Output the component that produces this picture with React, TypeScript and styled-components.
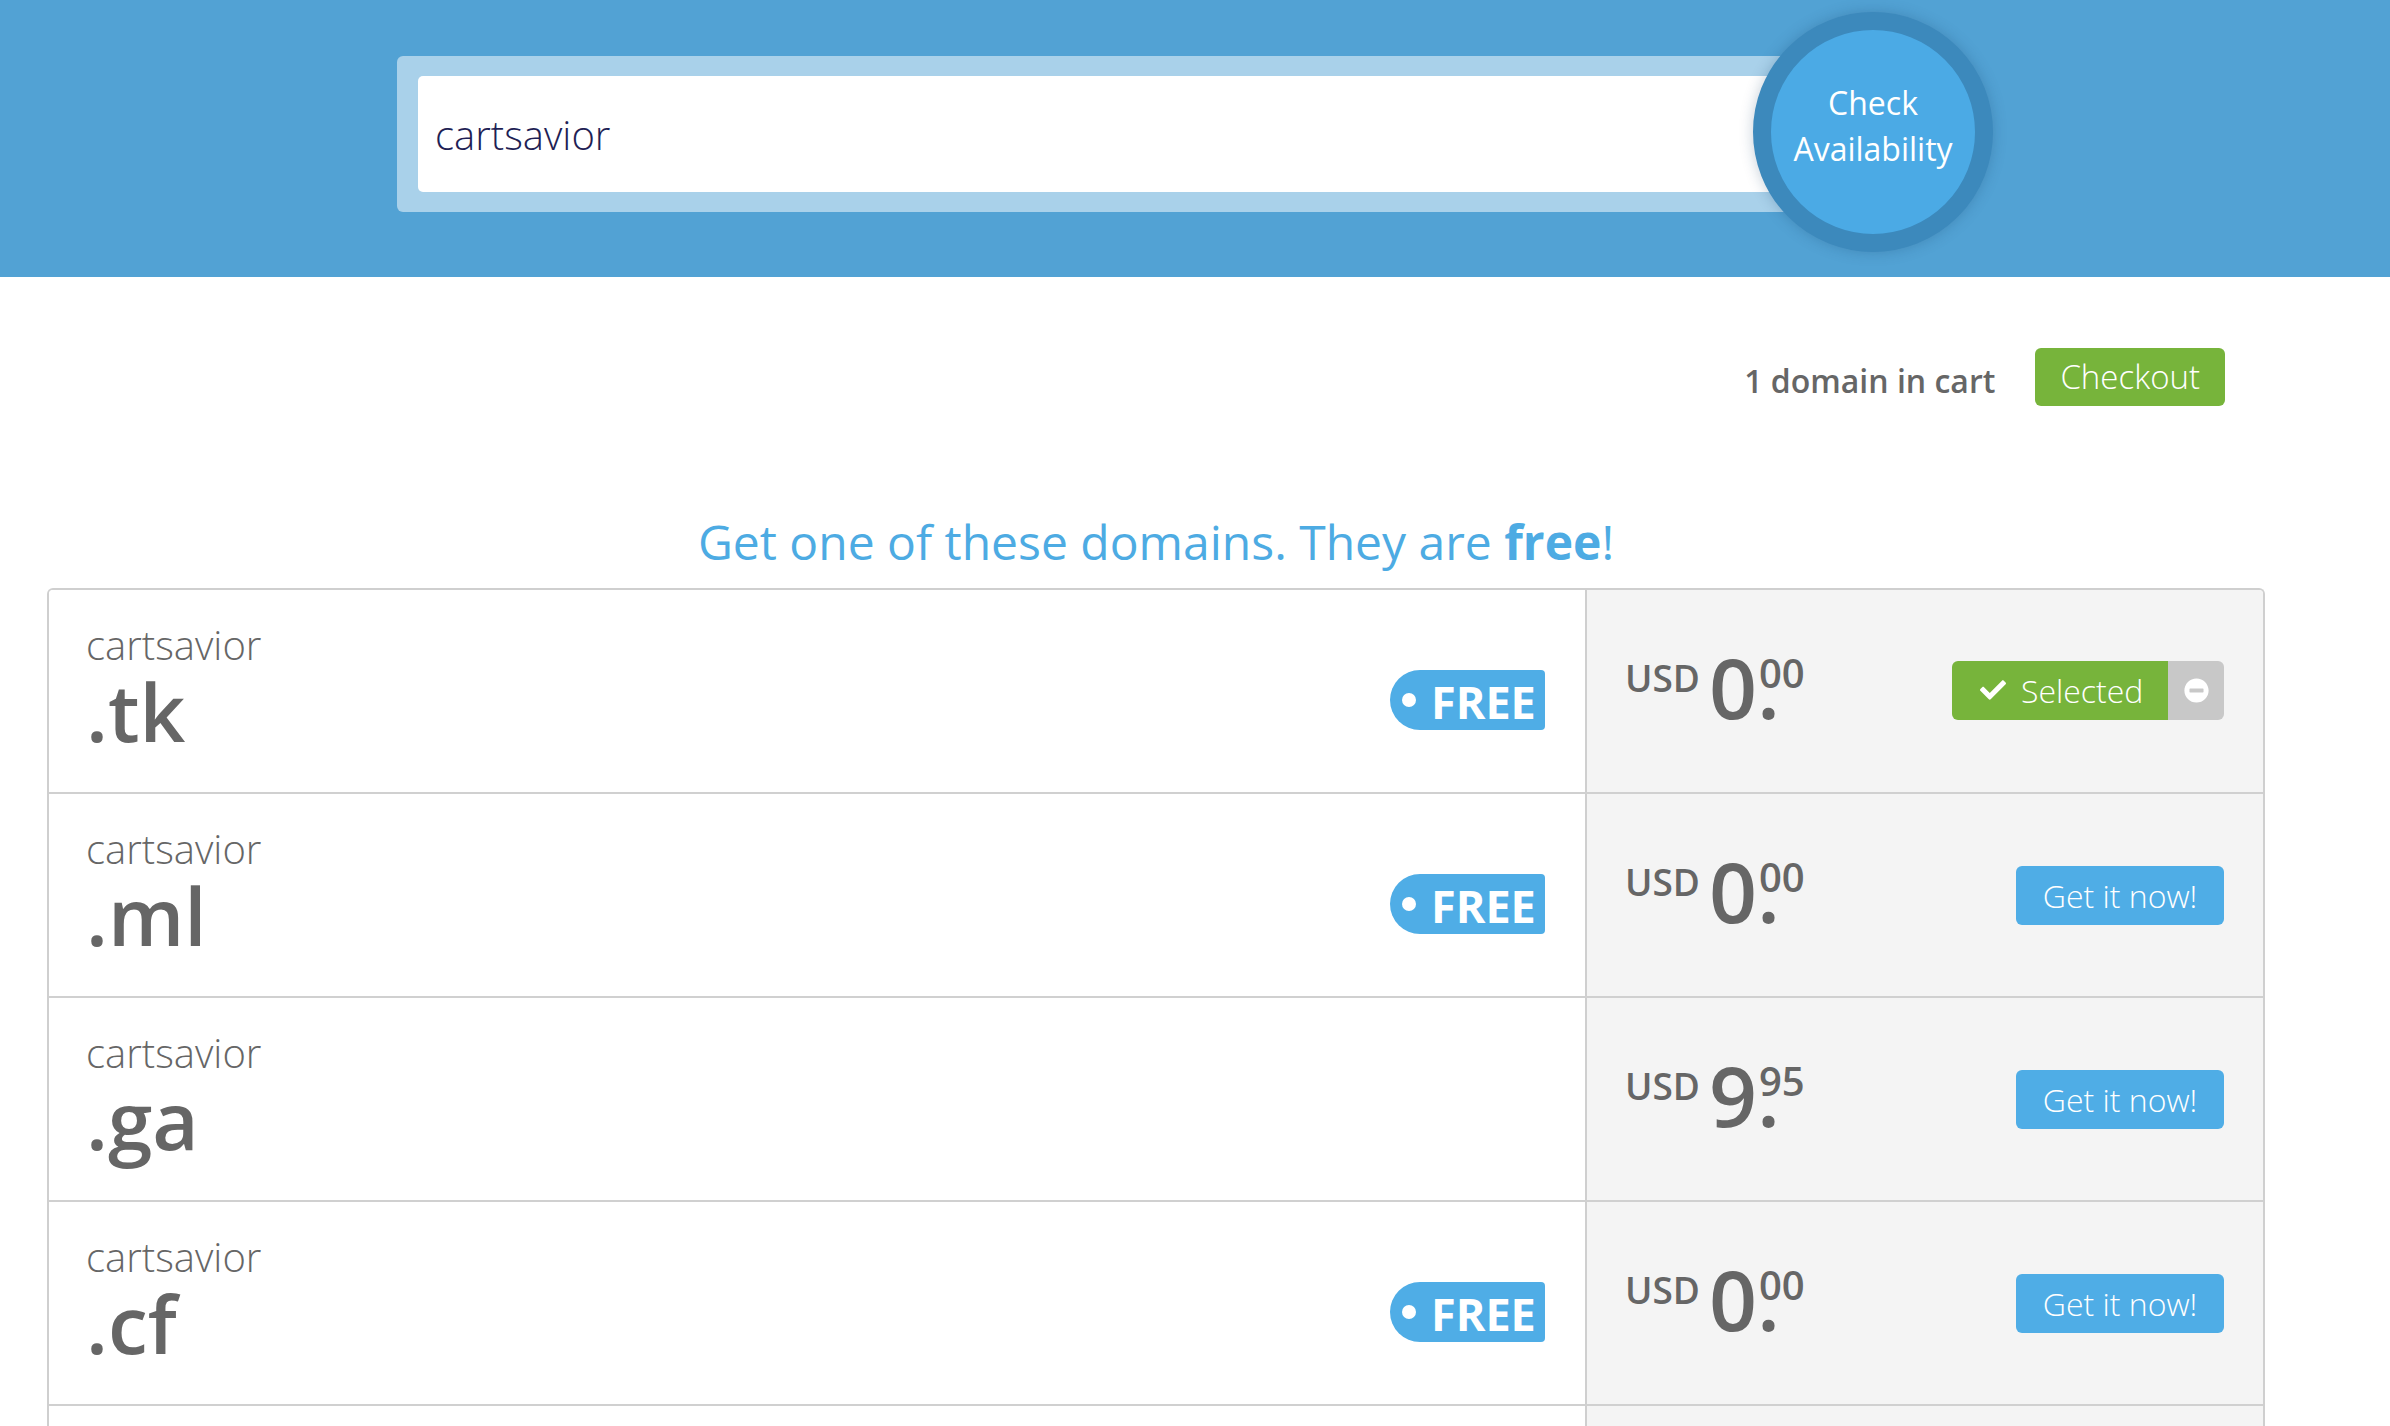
import React from 'react';
import styled, { createGlobalStyle } from 'styled-components';
import { FaCheck, FaMinusCircle } from 'react-icons/fa';

const GlobalStyle = createGlobalStyle`
  html, body {
    margin: 0;
    padding: 0;
    overflow: hidden;
    background: #fff;
  }
  * {
    box-sizing: border-box;
  }
  body {
    font-family: 'Open Sans', 'Liberation Sans', sans-serif;
    color: #666;
  }
`;

const Header = styled.header`
  height: 277px;
  background: #52a2d4;
  display: flex;
  justify-content: center;
  align-items: flex-start;
  padding-top: 12px;
`;

const SearchGroup = styled.div`
  width: 1596px;
  display: flex;
  align-items: flex-start;
`;

const Field = styled.div`
  flex: 1;
  height: 156px;
  margin-top: 44px;
  margin-right: -39px;
  padding: 20px 0 20px 21px;
  border-radius: 6px;
  background: rgba(255, 255, 255, 0.5);
`;

const Input = styled.input`
  display: block;
  width: 100%;
  height: 116px;
  border: none;
  outline: none;
  border-radius: 5px 0 0 5px;
  padding: 0 17px;
  background: #fff;
  font-family: inherit;
  font-size: 40px;
  font-weight: 300;
  color: #1f1f55;
`;

const CheckButton = styled.button`
  position: relative;
  z-index: 1;
  flex: none;
  width: 240px;
  height: 240px;
  border-radius: 50%;
  border: 18px solid #3c89bc;
  background: #4baae5;
  box-shadow: 0 0 14px rgba(20, 60, 100, 0.25);
  color: #fff;
  font-family: inherit;
  font-size: 32px;
  line-height: 46px;
  padding: 0 0 13px;
`;

const Main = styled.main`
  padding: 71px 125px 0 47px;
`;

const CartBar = styled.div`
  display: flex;
  justify-content: flex-end;
  align-items: center;
  gap: 40px;
  padding-right: 40px;
`;

const CartCount = styled.span`
  font-size: 32px;
  font-weight: 600;
  color: #666;
  padding-top: 7px;
`;

const CheckoutButton = styled.button`
  height: 58px;
  padding: 0 25px;
  border: none;
  border-radius: 6px;
  background: #77b43b;
  color: #fff;
  font-family: inherit;
  font-size: 33px;
  font-weight: 300;
  line-height: 58px;
`;

const Headline = styled.h2`
  margin: 106px 0 16px;
  text-align: center;
  font-size: 48px;
  font-weight: 400;
  line-height: 60px;
  color: #4dabe3;
  b {
    font-weight: 700;
  }
`;

const Table = styled.div`
  border: 2px solid #cfcfcf;
  border-bottom: none;
  border-radius: 6px 6px 0 0;
  overflow: hidden;
`;

const Row = styled.div`
  display: grid;
  grid-template-columns: 1fr 678px;
  height: 204px;
  border-bottom: 2px solid #d0d0d0;
`;

const NameCell = styled.div`
  display: flex;
  justify-content: space-between;
  align-items: flex-start;
  padding: 33px 40px 0 37px;
  background: #fff;
`;

const Name = styled.div`
  display: flex;
  flex-direction: column;
`;

const Label = styled.span`
  font-size: 40px;
  font-weight: 300;
  line-height: 44px;
  color: #666;
`;

const Tld = styled.span`
  font-size: 80px;
  font-weight: 600;
  line-height: 88px;
  color: #666;
`;

const FreeBadge = styled.span`
  display: flex;
  align-items: center;
  width: 155px;
  height: 60px;
  margin-top: 47px;
  padding: 3px 0 0 41px;
  border-radius: 30px 4px 4px 30px;
  background: #4fade6;
  color: #fff;
  font-size: 45px;
  font-weight: 700;
  line-height: 57px;
  position: relative;
  &::before {
    content: '';
    position: absolute;
    left: 12px;
    top: 23px;
    width: 14px;
    height: 14px;
    border-radius: 50%;
    background: #fff;
  }
`;

const PriceCell = styled.div`
  display: flex;
  justify-content: space-between;
  align-items: center;
  padding: 0 39px 0 38px;
  border-left: 2px solid #cfcfcf;
  background: #f4f4f4;
`;

const Price = styled.div`
  display: flex;
  align-items: flex-start;
  margin-bottom: 9px;
  color: #666;
`;

const Currency = styled.span`
  font-size: 37px;
  font-weight: 600;
  line-height: 1;
  margin: 14px 9px 0 0;
`;

const Whole = styled.span`
  font-size: 84px;
  font-weight: 600;
  line-height: 1;
`;

const Cents = styled.span`
  font-size: 40px;
  font-weight: 600;
  line-height: 1;
  margin: 8px 0 0 -21px;
`;

const GetButton = styled.button`
  width: 208px;
  height: 59px;
  border: none;
  border-radius: 6px;
  background: #4fade6;
  color: #fff;
  font-family: inherit;
  font-size: 32px;
  font-weight: 300;
  line-height: 59px;
  padding: 0;
`;

const SelectedGroup = styled.div`
  display: flex;
  height: 59px;
  margin-top: -2px;
  border-radius: 6px;
  overflow: hidden;
`;

const SelectedLabel = styled.span`
  display: flex;
  align-items: center;
  gap: 15px;
  width: 216px;
  padding-left: 28px;
  background: #77b43b;
  color: #fff;
  font-size: 32px;
  font-weight: 300;
  svg {
    width: 26px;
    height: 26px;
  }
`;

const RemoveButton = styled.button`
  width: 56px;
  border: none;
  padding: 0;
  background: #c8c8c8;
  color: #fff;
  display: flex;
  align-items: center;
  justify-content: center;
  svg {
    width: 25px;
    height: 25px;
  }
`;

interface Domain {
  tld: string;
  free: boolean;
  whole: string;
  cents: string;
  selected?: boolean;
}

const domains: Domain[] = [
  { tld: '.tk', free: true, whole: '0', cents: '00', selected: true },
  { tld: '.ml', free: true, whole: '0', cents: '00' },
  { tld: '.ga', free: false, whole: '9', cents: '95' },
  { tld: '.cf', free: true, whole: '0', cents: '00' },
  { tld: '.gq', free: true, whole: '0', cents: '00' },
];

const DomainRow = ({ tld, free, whole, cents, selected }: Domain) => (
  <Row>
    <NameCell>
      <Name>
        <Label>cartsavior</Label>
        <Tld>{tld}</Tld>
      </Name>
      {free && <FreeBadge>FREE</FreeBadge>}
    </NameCell>
    <PriceCell>
      <Price>
        <Currency>USD</Currency>
        <Whole>{whole}.</Whole>
        <Cents>{cents}</Cents>
      </Price>
      {selected ? (
        <SelectedGroup>
          <SelectedLabel>
            <FaCheck />
            Selected
          </SelectedLabel>
          <RemoveButton aria-label="Remove">
            <FaMinusCircle />
          </RemoveButton>
        </SelectedGroup>
      ) : (
        <GetButton>Get it now!</GetButton>
      )}
    </PriceCell>
  </Row>
);

export default function App() {
  return (
    <>
      <GlobalStyle />
      <Header>
        <SearchGroup>
          <Field>
            <Input defaultValue="cartsavior" readOnly />
          </Field>
          <CheckButton>
            Check
            <br />
            Availability
          </CheckButton>
        </SearchGroup>
      </Header>
      <Main>
        <CartBar>
          <CartCount>1 domain in cart</CartCount>
          <CheckoutButton>Checkout</CheckoutButton>
        </CartBar>
        <Headline>
          Get one of these domains. They are <b>free</b>!
        </Headline>
        <Table>
          {domains.map((d) => (
            <DomainRow key={d.tld} {...d} />
          ))}
        </Table>
      </Main>
    </>
  );
}
